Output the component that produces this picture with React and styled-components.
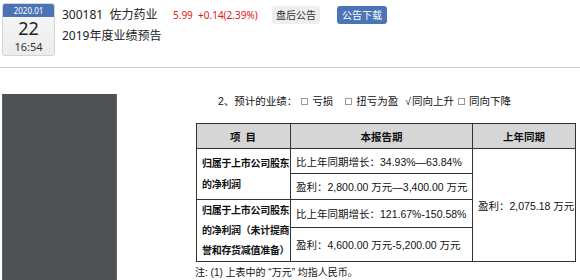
import styled, { createGlobalStyle } from 'styled-components';

const GlobalStyle = createGlobalStyle`
  body {
    margin: 0;
    background: #fff;
    font-family: 'Noto Sans', 'Noto Sans CJK SC', sans-serif;
    color: #222;
  }
`;

const Page = styled.div`
  width: 580px;
  height: 280px;
  overflow: hidden;
`;

const Header = styled.div`
  display: flex;
  align-items: flex-start;
  padding: 3px 0 0 2px;
  border-bottom: 1px solid #cfcfcf;
  box-sizing: border-box;
  height: 68px;
`;

const DateBadge = styled.div`
  width: 53px;
  height: 53px;
  box-sizing: border-box;
  border: 1px solid #d4d4d4;
  border-radius: 3px;
  background: linear-gradient(#f7f7f7, #ececec);
  display: flex;
  flex-direction: column;
  align-items: center;
  overflow: hidden;
`;

const Month = styled.div`
  width: 100%;
  height: 13px;
  background: #4b74b6;
  color: #fff;
  font-size: 8px;
  line-height: 13px;
  text-align: center;
`;

const Day = styled.div`
  font-size: 18px;
  line-height: 20px;
  margin-top: 1px;
  color: #222;
`;

const Time = styled.div`
  font-size: 11px;
  line-height: 13px;
  margin-top: 2px;
  color: #333;
`;

const Info = styled.div`
  margin-left: 7px;
  display: flex;
  flex-direction: column;
`;

const TopRow = styled.div`
  display: flex;
  align-items: center;
  height: 20px;
  margin-top: 2px;
`;

const Title = styled.div`
  font-size: 12px;
  line-height: 18px;
  white-space: pre;
  color: #222;
  width: 111px;
`;

const Quote = styled.div`
  font-size: 10px;
  color: #e5141b;
  white-space: pre;
  width: 99px;
`;

const Button = styled.div`
  height: 18px;
  line-height: 18px;
  font-size: 10px;
  padding: 0 ${p => (p.primary ? '5px' : '4px')};
  margin-right: ${p => (p.primary ? '0' : '17px')};
  border-radius: 3px;
  background: ${p => (p.primary ? '#4b74b6' : '#eeeeee')};
  color: ${p => (p.primary ? '#fff' : '#333')};
`;

const Subtitle = styled.div`
  font-size: 12px;
  line-height: 18px;
  margin-top: 2px;
  color: #222;
`;

const Body = styled.div`
  display: flex;
  margin-top: 26px;
  padding-left: 2px;
`;

const DarkPanel = styled.div`
  width: 115px;
  height: 186px;
  box-sizing: border-box;
  background: #4f5255;
  border-left: 1px solid #5e6164;
  border-right: 1px solid #66696c;
`;

const Doc = styled.div`
  margin-left: 78px;
  width: 381px;
  font-family: 'Liberation Sans', 'Noto Sans CJK SC', sans-serif;
  color: #111;
`;

const Forecast = styled.div`
  font-size: 10.5px;
  line-height: 14px;
  padding-left: 23px;
  white-space: pre;
  display: flex;
  align-items: center;
`;

const Box = styled.span`
  display: inline-block;
  width: 5px;
  height: 5px;
  border: 1px solid #9a9a9a;
  margin: 0 ${p => p.after || 4}px 0 ${p => p.before || 4}px;
`;

const Check = styled.span`
  margin: 0 1px 0 ${p => p.before}px;
`;

const Table = styled.table`
  margin-top: 15px;
  margin-left: 1px;
  border-collapse: collapse;
  width: 379px;
  table-layout: fixed;
`;

const Th = styled.th`
  background: #d6d6d6;
  border: 1px solid #333;
  font-size: 10.5px;
  font-weight: bold;
  height: 24px;
  padding: 0;
  letter-spacing: ${p => (p.spaced ? '1px' : '0')};
`;

const Label = styled.td`
  border: 1px solid #333;
  font-size: 10px;
  font-weight: bold;
  letter-spacing: -0.3px;
  line-height: ${p => p.lh}px;
  padding: 0 0 0 5px;
  vertical-align: middle;
`;

const Cell = styled.td`
  border: 1px solid #333;
  font-size: 10.5px;
  padding: 0 0 0 5px;
  vertical-align: middle;
  white-space: nowrap;
`;

const Row = styled.tr`
  height: ${p => p.h}px;
`;

const Note = styled.div`
  font-size: 10px;
  line-height: 14px;
  margin-top: 4px;
`;

export default function App() {
  return (
    <Page>
      <GlobalStyle />
      <Header>
        <DateBadge>
          <Month>2020.01</Month>
          <Day>22</Day>
          <Time>16:54</Time>
        </DateBadge>
        <Info>
          <TopRow>
            <Title>{'300181  佐力药业'}</Title>
            <Quote>{'5.99  +0.14(2.39%)'}</Quote>
            <Button>盘后公告</Button>
            <Button primary>公告下载</Button>
          </TopRow>
          <Subtitle>2019年度业绩预告</Subtitle>
        </Info>
      </Header>
      <Body>
        <DarkPanel />
        <Doc>
          <Forecast>
            2、预计的业绩：<Box />亏损<Box before={12} />扭亏为盈<Check before={7}>√</Check>同向上升<Box before={4} />同向下降
          </Forecast>
          <Table>
            <colgroup>
              <col style={{ width: 94 }} />
              <col style={{ width: 182 }} />
              <col style={{ width: 103 }} />
            </colgroup>
            <thead>
              <Row h={25}>
                <Th spaced>项 目</Th>
                <Th>本报告期</Th>
                <Th>上年同期</Th>
              </Row>
            </thead>
            <tbody>
              <Row h={25}>
                <Label rowSpan={2} lh={21}>
                  归属于上市公司股东的净利润
                </Label>
                <Cell>比上年同期增长：34.93%—63.84%</Cell>
                <Cell rowSpan={4}>盈利：2,075.18 万元</Cell>
              </Row>
              <Row h={26}>
                <Cell>盈利：2,800.00 万元—3,400.00 万元</Cell>
              </Row>
              <Row h={28}>
                <Label rowSpan={2} lh={20}>
                  归属于上市公司股东的净利润（未计提商誉和存货减值准备）
                </Label>
                <Cell>比上年同期增长：121.67%-150.58%</Cell>
              </Row>
              <Row h={34}>
                <Cell>盈利：4,600.00 万元-5,200.00 万元</Cell>
              </Row>
            </tbody>
          </Table>
          <Note>注: (1) 上表中的 “万元” 均指人民币。</Note>
        </Doc>
      </Body>
    </Page>
  );
}
